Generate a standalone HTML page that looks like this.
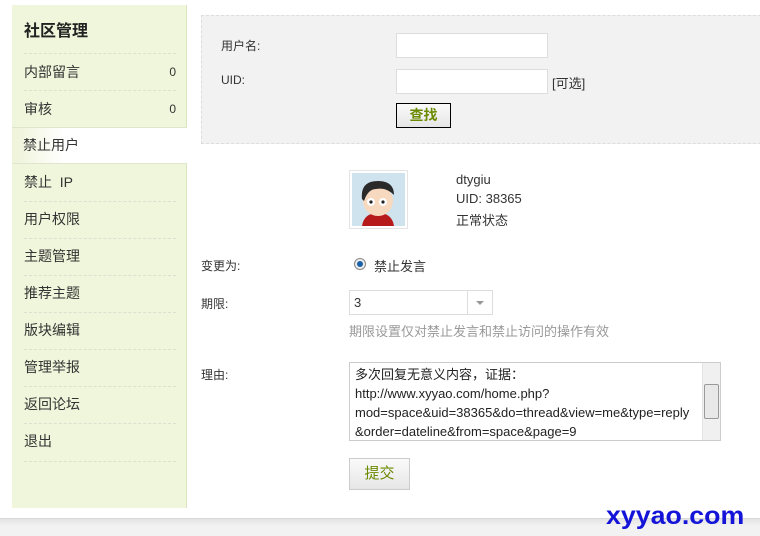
<!DOCTYPE html>
<html><head><meta charset="utf-8"><style>
*{margin:0;padding:0;box-sizing:border-box}
body{width:760px;height:536px;position:relative;background:#fff;font-family:"Liberation Sans","Noto Sans CJK SC",sans-serif;font-size:13px;color:#333;overflow:hidden}
.a{position:absolute}
#side{left:12px;top:5px;width:175px;height:503px;background:#f0f6db;border-right:1px solid #dbe6bf}
#side h2{position:absolute;left:12px;top:12px;font-size:16px;font-weight:bold;color:#222}
.it{position:absolute;left:12px;width:152px;font-size:14px;color:#333;line-height:16px}
.it b{position:absolute;right:0;font-weight:normal;font-size:12px}
.ln{position:absolute;left:12px;width:152px;border-top:1px dashed #dde0d0}
#act{position:absolute;left:0;top:122px;width:175px;height:37px;background:linear-gradient(90deg,#eef3d8 0,#fff 30%);border-top:1px solid #dfe6cf;border-bottom:1px solid #dfe6cf}
#srch{left:201px;top:15px;width:570px;height:129px;background:#f2f2f2;border:1px dashed #ddd}
.inp{position:absolute;background:#fff;border:1px solid #ddd}
.lbl{position:absolute;font-size:12px;color:#333}
.btn{position:absolute;background:linear-gradient(#fafafa,#e6e6e6);color:#6b8a00;font-weight:bold;text-align:center;font-size:14px}
</style></head><body>
<div id="side" class="a">
<h2>社区管理</h2>
<div class="ln" style="top:48px"></div>
<div class="it" style="top:59px">内部留言<b>0</b></div>
<div class="ln" style="top:85px"></div>
<div class="it" style="top:96px">审核<b>0</b></div>
<div id="act"></div>
<div class="it" style="top:132px;left:11px">禁止用户</div>
<div class="it" style="top:169px">禁止&nbsp;&nbsp;IP</div>
<div class="ln" style="top:196px"></div>
<div class="it" style="top:206px">用户权限</div>
<div class="ln" style="top:233px"></div>
<div class="it" style="top:243px">主题管理</div>
<div class="ln" style="top:270px"></div>
<div class="it" style="top:280px">推荐主题</div>
<div class="ln" style="top:307px"></div>
<div class="it" style="top:317px">版块编辑</div>
<div class="ln" style="top:344px"></div>
<div class="it" style="top:354px">管理举报</div>
<div class="ln" style="top:381px"></div>
<div class="it" style="top:391px">返回论坛</div>
<div class="ln" style="top:418px"></div>
<div class="it" style="top:428px">退出</div>
<div class="ln" style="top:456px"></div>
</div>
<div id="srch" class="a"></div>
<div class="lbl" style="left:221px;top:37px">用户名:</div>
<div class="lbl" style="left:221px;top:73px">UID:</div>
<div class="inp" style="left:396px;top:33px;width:152px;height:25px"></div>
<div class="inp" style="left:396px;top:69px;width:152px;height:25px"></div>
<div class="lbl" style="left:552px;top:76px;font-size:13px;line-height:16px">[可选]</div>
<div class="btn" style="left:396px;top:103px;width:55px;height:25px;border:1px solid #000;line-height:23px">查找</div>

<div class="a" style="left:349px;top:170px;width:59px;height:59px;border:1px solid #e4e4e4;background:#fff;padding:2px">
<svg width="53" height="53" viewBox="0 0 53 53"><rect width="53" height="53" fill="#cfe3ef"/>
<path d="M10 53 Q12 40 26 40 Q40 40 42 53Z" fill="#b61a1a"/>
<ellipse cx="26" cy="28" rx="15" ry="15" fill="#f6d9bf"/>
<path d="M10 26 Q8 8 26 8 Q42 8 42 22 Q34 14 24 16 Q16 16 12 28Z" fill="#2a2a2a"/>
<circle cx="19" cy="29" r="4" fill="#fff"/><circle cx="31" cy="29" r="4" fill="#fff"/>
<circle cx="19" cy="29" r="1.6" fill="#222"/><circle cx="31" cy="29" r="1.6" fill="#222"/>
</svg></div>
<div class="lbl" style="left:456px;top:172px;font-size:13px">dtygiu</div>
<div class="lbl" style="left:456px;top:191px;font-size:13px">UID: 38365</div>
<div class="lbl" style="left:456px;top:210px;font-size:13px">正常状态</div>

<div class="lbl" style="left:201px;top:257px">变更为:</div>
<div class="a" style="left:354px;top:258px;width:12px;height:12px;border-radius:50%;border:1px solid #888;background:#eee"><div style="margin:2px;width:6px;height:6px;border-radius:50%;background:#1a5fa8"></div></div>
<div class="lbl" style="left:374px;top:256px;font-size:13px">禁止发言</div>

<div class="lbl" style="left:201px;top:295px">期限:</div>
<div class="inp" style="left:349px;top:290px;width:144px;height:25px;line-height:23px;padding-left:4px;font-size:13px">3
<div style="position:absolute;right:0;top:0;width:25px;height:23px;border-left:1px solid #ddd"><div style="position:absolute;left:8px;top:10px;border:4px solid transparent;border-top:4px solid #999"></div></div></div>
<div class="lbl" style="left:349px;top:321px;color:#999;font-size:13px">期限设置仅对禁止发言和禁止访问的操作有效</div>

<div class="lbl" style="left:201px;top:366px">理由:</div>
<div class="inp" style="left:349px;top:362px;width:372px;height:79px;border-color:#ccc;padding:2px 0 0 5px;font-size:13px;line-height:19px;color:#222;white-space:nowrap;overflow:hidden">多次回复无意义内容，证据：<br>http://www.xyyao.com/home.php?<br>mod=space&amp;uid=38365&amp;do=thread&amp;view=me&amp;type=reply<br>&amp;order=dateline&amp;from=space&amp;page=9
<div style="position:absolute;right:0;top:0;width:18px;height:77px;background:#f0f0f0;border-left:1px solid #e4e4e4"><div style="position:absolute;left:1px;top:21px;width:15px;height:35px;border:1px solid #999;background:#e8e8e8;border-radius:2px"></div></div></div>
<div class="btn" style="left:349px;top:458px;width:61px;height:32px;border:1px solid #ccc;line-height:30px;font-weight:normal;font-size:15px">提交</div>

<div class="a" style="left:0;top:518px;width:760px;height:18px;background:linear-gradient(#e4e4e4,#f2f2f2 40%);border-top:1px solid #d8d8d8"></div>
<div class="a" style="left:606px;top:502px;font-size:25px;font-weight:bold;color:#1414d8;font-family:'Liberation Sans',sans-serif;transform:scaleX(1.07);transform-origin:0 0">xyyao.com</div>
</body></html>
